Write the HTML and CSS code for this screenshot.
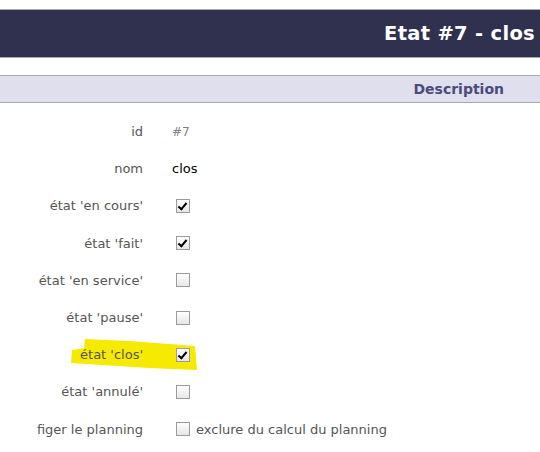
FILE: index.html
```html
<!DOCTYPE html>
<html lang="fr">
<head>
<meta charset="utf-8">
<link rel="stylesheet" href="styles.css">
</head>
<body>
<div class="page">
  <div class="titlebar"><h1 class="title">Etat #7 - clos</h1></div>
  <div class="section"><span class="section-title">Description</span></div>
  <div class="form">
    <div class="row"><span class="label">id</span><span class="value muted">#7</span></div>
    <div class="row"><span class="label">nom</span><span class="value dark">clos</span></div>
    <div class="row"><span class="label">état 'en cours'</span><span class="value"><span class="cb checked"></span></span></div>
    <div class="row"><span class="label">état 'fait'</span><span class="value"><span class="cb checked"></span></span></div>
    <div class="row"><span class="label">état 'en service'</span><span class="value"><span class="cb"></span></span></div>
    <div class="row"><span class="label">état 'pause'</span><span class="value"><span class="cb"></span></span></div>
    <div class="row highlighted">
      <svg class="marker" width="140" height="34" viewBox="0 0 140 34"><polygon points="16,2 60,4 126,9 128,33 80,31 2,26 3,13 15,11" fill="#f6ea00"/></svg>
      <span class="label">état 'clos'</span><span class="value"><span class="cb checked"></span></span>
    </div>
    <div class="row"><span class="label">état 'annulé'</span><span class="value"><span class="cb"></span></span></div>
    <div class="row"><span class="label">figer le planning</span><span class="value"><span class="cb"></span><span class="cb-text">exclure du calcul du planning</span></span></div>
  </div>
</div>
</body>
</html>
```
FILE: styles.css
```css
html, body {
  margin: 0;
  padding: 0;
  background: #ffffff;
}
body {
  font-family: "DejaVu Sans", Verdana, sans-serif;
  width: 540px;
  height: 452px;
  overflow: hidden;
}
.page {
  padding-top: 9px;
}
.titlebar {
  background: #30304f;
  border-top: 1px solid #a8a8b4;
  border-bottom: 1px solid #a8a8b4;
  height: 47px;
  display: flex;
  align-items: center;
  justify-content: flex-end;
  padding-right: 5px;
}
.title {
  margin: 0;
  color: #ffffff;
  font-size: 19.5px;
  font-weight: bold;
  letter-spacing: 0.3px;
}
.section {
  margin-top: 17px;
  background: #dfdfed;
  border-top: 1px solid #a6a6b8;
  border-bottom: 1px solid #a6a6b8;
  height: 26px;
  display: flex;
  align-items: center;
  justify-content: flex-end;
  padding-right: 36px;
}
.section-title {
  color: #4b4b7c;
  font-size: 14px;
  font-weight: bold;
}
.form {
  padding-top: 10px;
  display: flex;
  flex-direction: column;
}
.row {
  position: relative;
  display: flex;
  align-items: center;
  height: 37.2px;
  font-size: 13px;
}
.label {
  width: 143px;
  text-align: right;
  color: #555555;
  position: relative;
}
.value {
  margin-left: 29px;
  display: flex;
  align-items: center;
  color: #555555;
  position: relative;
}
.muted {
  color: #808080;
  font-size: 12px;
}
.dark {
  color: #000000;
  font-size: 13px;
}
.cb {
  display: inline-block;
  box-sizing: border-box;
  width: 14px;
  height: 14px;
  margin-left: 4px;
  border: 1px solid #9b9b9b;
  background: linear-gradient(#ffffff, #e6e6e6);
  position: relative;
}
.cb.checked::after {
  content: "";
  position: absolute;
  left: 3px;
  top: 1px;
  width: 3px;
  height: 7px;
  border-right: 2px solid #000;
  border-bottom: 2px solid #000;
  transform: rotate(40deg);
}
.cb-text {
  margin-left: 6px;
  color: #555555;
  font-size: 13px;
}
.marker {
  position: absolute;
  left: 69px;
  top: 1px;
}
```
